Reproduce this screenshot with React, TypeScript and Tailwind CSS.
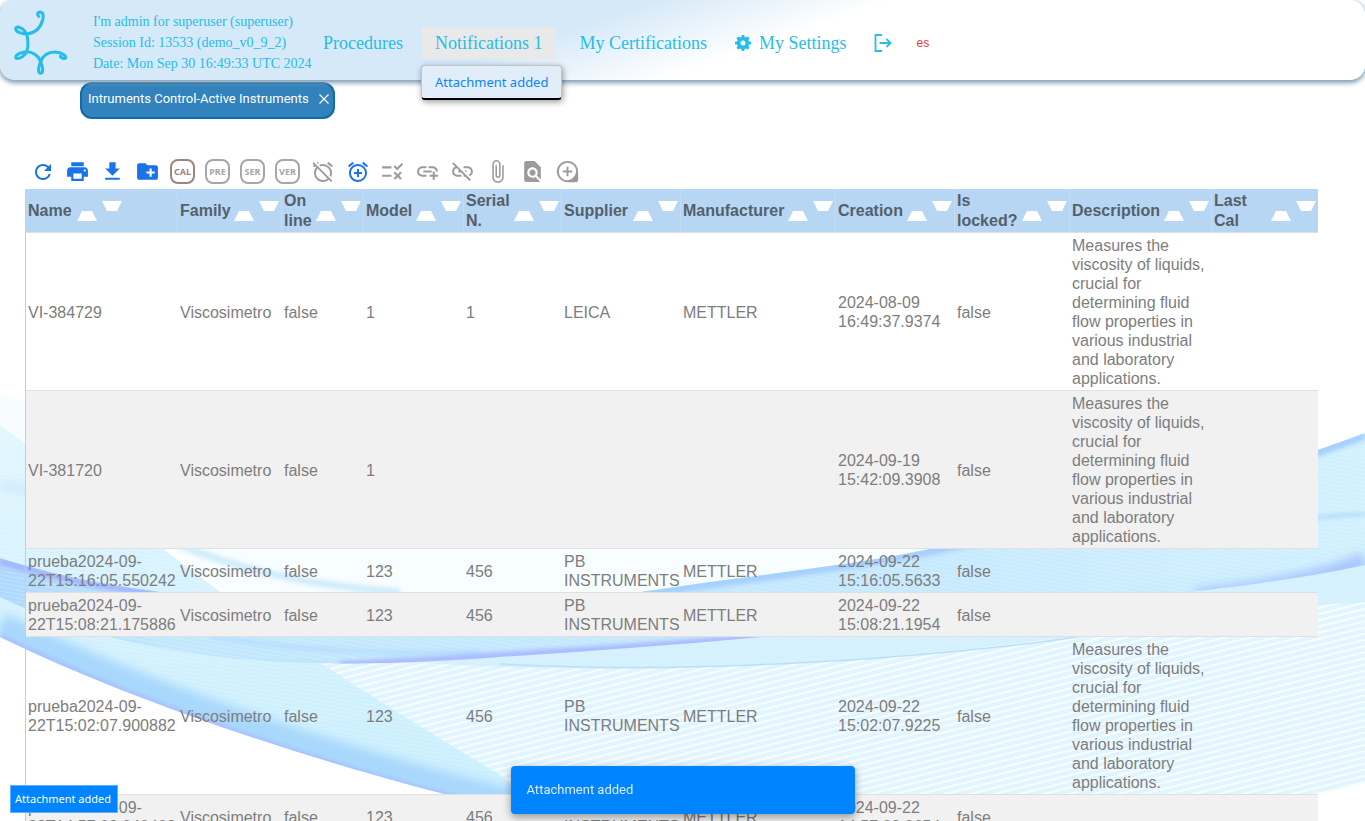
import React from "react";
import {
  MdRefresh,
  MdPrint,
  MdCreateNewFolder,
  MdAlarmOff,
  MdAddAlarm,
  MdRule,
  MdAddLink,
  MdLinkOff,
  MdAttachFile,
  MdFindInPage,
} from "react-icons/md";

const LONG_TEXT =
  "Measures the viscosity of liquids, crucial for determining fluid flow properties in various industrial and laboratory applications.";

const COLUMNS = [
  { label: "Name", width: "w-[152px]" },
  { label: "Family", width: "w-[104px]" },
  { label: "On line", width: "w-[82px]" },
  { label: "Model", width: "w-[100px]" },
  { label: "Serial N.", width: "w-[98px]" },
  { label: "Supplier", width: "w-[119px]" },
  { label: "Manufacturer", width: "w-[155px]" },
  { label: "Creation", width: "w-[119px]" },
  { label: "Is locked?", width: "w-[115px]" },
  { label: "Description", width: "w-[142px]" },
  { label: "Last Cal", width: "w-[106px]" },
];

const PB = "PB INSTRUMENTS";
const ROWS: string[][] = [
  ["VI-384729", "Viscosimetro", "false", "1", "1", "LEICA", "METTLER", "2024-08-09 16:49:37.9374", "false", LONG_TEXT, ""],
  ["VI-381720", "Viscosimetro", "false", "1", "", "", "", "2024-09-19 15:42:09.3908", "false", LONG_TEXT, ""],
  ["prueba2024-09-22T15:16:05.550242", "Viscosimetro", "false", "123", "456", PB, "METTLER", "2024-09-22 15:16:05.5633", "false", "", ""],
  ["prueba2024-09-22T15:08:21.175886", "Viscosimetro", "false", "123", "456", PB, "METTLER", "2024-09-22 15:08:21.1954", "false", "", ""],
  ["prueba2024-09-22T15:02:07.900882", "Viscosimetro", "false", "123", "456", PB, "METTLER", "2024-09-22 15:02:07.9225", "false", LONG_TEXT, ""],
  ["prueba2024-09-22T14:57:09.040403", "Viscosimetro", "false", "123", "456", PB, "METTLER", "2024-09-22 14:57:09.0654", "false", "", ""],
];

function Waves() {
  return (
    <svg
      className="absolute inset-0 -z-10 h-full w-full"
      viewBox="0 0 1365 821"
      preserveAspectRatio="none"
      aria-hidden="true"
    >
      <defs>
        <linearGradient id="leftVeil" x1="0" y1="0" x2="0" y2="1">
          <stop offset="0" stopColor="#e2f6ff" />
          <stop offset="0.5" stopColor="#d2f1fe" />
          <stop offset="1" stopColor="#c8eefd" />
        </linearGradient>
        <linearGradient id="band" x1="0" y1="0" x2="1" y2="0">
          <stop offset="0" stopColor="#a9d4fd" />
          <stop offset="0.12" stopColor="#bfe6fe" />
          <stop offset="0.65" stopColor="#bfe6fe" />
          <stop offset="1" stopColor="#cdeffe" />
        </linearGradient>
        <pattern id="hatch" width="40" height="6" patternUnits="userSpaceOnUse" patternTransform="rotate(-14)">
          <path d="M0 3H40" stroke="#fff" strokeWidth="1.600" />
        </pattern>
        <pattern id="fine" width="40" height="4" patternUnits="userSpaceOnUse" patternTransform="rotate(10)">
          <path d="M0 2H40" stroke="#fff" strokeWidth="0.800" opacity="0.35" />
        </pattern>
        <filter id="soft" x="-10%" y="-50%" width="120%" height="200%">
          <feGaussianBlur stdDeviation="2" />
        </filter>
        <filter id="softer" x="-10%" y="-50%" width="120%" height="200%">
          <feGaussianBlur stdDeviation="5" />
        </filter>
        <clipPath id="leftClip">
          <path d="M0 425C60 470 140 532 220 592S360 690 500 775L560 821C390 786 160 715 0 637Z" />
        </clipPath>
        <clipPath id="bandClip">
          <path d="M0 558C60 577 110 585 160 592C300 622 480 616 640 592C760 574 850 566 930 549C1100 515 1240 480 1365 433V565C1250 590 1100 600 960 615C800 636 650 647 500 657C300 672 140 664 0 597Z" />
        </clipPath>
      </defs>

      <path d="M0 394L30 402V450L0 425Z" fill="#f7fdff" />
      <path d="M160 540H960V640L500 775C400 730 290 640 160 540Z" fill="#f8fdff" />
      <path d="M220 592C420 640 760 650 960 610C1120 595 1250 560 1365 540V783C1200 825 1000 840 760 836L560 821L500 775C400 720 310 660 220 592Z" fill="#e1f5ff" />
      <path d="M220 592C420 640 760 650 960 610C1120 595 1250 560 1365 540V783C1200 825 1000 840 760 836L560 821L500 775C400 720 310 660 220 592Z" fill="url(#hatch)" />

      <path d="M300 650C420 668 620 676 850 660C1000 648 1100 634 1190 615C1260 608 1320 605 1365 602V560L960 610L500 650Z" fill="#d2effe" opacity="0.85" />
      <path d="M500 664C620 670 720 668 850 660C960 652 1040 644 1120 630" fill="none" stroke="#b9e0fb" strokeWidth="1.500" />

      <path d="M0 425C60 470 140 532 220 592S360 690 500 775L560 821C390 786 160 715 0 637Z" fill="url(#leftVeil)" />
      <g clipPath="url(#leftClip)">
        <path d="M0 425C60 470 140 532 220 592S360 690 500 775L560 821C390 786 160 715 0 637Z" fill="url(#fine)" />
        <path d="M0 485Q40 490 80 510" fill="none" stroke="#bfe2fb" strokeWidth="5" filter="url(#softer)" />
        <path d="M0 625C160 703 390 777 560 812" fill="none" stroke="#a9d8fd" strokeWidth="26" filter="url(#softer)" />
        <path d="M0 636C160 714 390 787 560 822" fill="none" stroke="#a3bdff" strokeWidth="5" filter="url(#soft)" />
      </g>

      <path d="M0 558C60 577 110 585 160 592C300 622 480 616 640 592C760 574 850 566 930 549C1100 515 1240 480 1365 433V565C1250 590 1100 600 960 615C800 636 650 647 500 657C300 672 140 664 0 597Z" fill="url(#band)" opacity="0.92" />
      <g clipPath="url(#bandClip)">
        <path d="M0 430H1365V821H0Z" fill="url(#fine)" />
        <path d="M0 561C60 580 110 588 160 594" fill="none" stroke="#9fb6ff" strokeWidth="7" filter="url(#soft)" />
        <path d="M640 594C760 576 850 567 930 551C1100 517 1240 482 1365 435" fill="none" stroke="#a5d0fd" strokeWidth="9" filter="url(#soft)" />
        <path d="M60 625C160 665 260 668 400 664" fill="none" stroke="#aedafb" strokeWidth="4" filter="url(#soft)" />
        <path d="M210 636C300 652 400 654 480 652" fill="none" stroke="#aedafb" strokeWidth="3" filter="url(#soft)" />
        <path d="M340 665C450 659 650 647 810 633" fill="none" stroke="#a9b8ff" strokeWidth="7" filter="url(#soft)" />
        <path d="M1195 597C1260 589 1320 580 1365 560" fill="none" stroke="#a9c6ff" strokeWidth="16" filter="url(#softer)" />
        <path d="M1250 525Q1320 516 1365 514" fill="none" stroke="#a9d4fb" strokeWidth="3" filter="url(#soft)" />
      </g>
      <path d="M180 545C250 574 320 586 400 592" fill="none" stroke="#cdecfc" strokeWidth="7" filter="url(#soft)" />
    </svg>
  );
}

function Logo() {
  return (
    <svg
      className="mt-1.5"
      width="56"
      height="66"
      viewBox="24 15 168 198"
      fill="none"
      stroke="#25bdea"
      strokeWidth="9"
      strokeLinecap="round"
      strokeLinejoin="round"
      aria-hidden="true"
    >
      <path d="M101 34C95 29 97 21 106 21C116 22 116 34 113 45C106 70 92 84 65 87C48 87 31 80 32 70C34 62 52 68 60 79C70 92 71 122 66 138C61 152 44 162 34 160C28 154 38 144 58 141C82 138 101 152 107 170C114 186 116 204 107 205C98 204 99 186 107 170C114 150 128 141 150 141C172 142 186 154 182 159C178 163 168 159 166 154" />
    </svg>
  );
}

function Arrow({ dir, label }: { dir: "up" | "down"; label: string }) {
  return (
    <button type="button" aria-label={`Sort ${label} ${dir}`} className="h-5 w-5 shrink-0">
      <svg width="20" height="20" viewBox="0 0 20 20" fill="#fff" aria-hidden="true">
        {dir === "up" ? <path d="M5 10H15L20 20H0Z" /> : <path d="M0 0H20L15 10H5Z" />}
      </svg>
    </button>
  );
}

function Tool({ label, color, children }: { label: string; color: string; children: React.ReactNode }) {
  return (
    <button type="button" aria-label={label} className={`flex h-6 w-[25px] items-center justify-center ${color}`}>
      {children}
    </button>
  );
}

function Badge({ text, tone }: { text: string; tone: string }) {
  return (
    <button
      type="button"
      className={`flex h-[25px] w-[25px] items-center justify-center rounded-lg border-2 font-["Noto_Sans",sans-serif] text-[9px] font-bold ${tone}`}
    >
      {text}
    </button>
  );
}

export default function App() {
  const gray = "text-[#9b9b9b]";
  const blue = "text-[#1a73e8]";
  return (
    <div className='relative isolate h-screen overflow-hidden bg-white font-["Liberation_Sans",Arial,sans-serif] text-base text-[#7d7d7d]'>
      <Waves />

      <header className='relative z-10 flex h-20 items-center rounded-[15px] bg-[linear-gradient(161deg,#d6e9f8_41%,#ffffff_56%)] pl-[13px] font-["Liberation_Serif",serif] text-[#25bdea] shadow-[0_2px_5px_1px_#7f9db5]'>
        <Logo />
        <div className="mt-1 ml-6 w-[230px] text-sm leading-[21px]">
          <p>I'm admin for superuser (superuser)</p>
          <p>Session Id: 13533 (demo_v0_9_2)</p>
          <p>Date: Mon Sep 30 16:49:33 UTC 2024</p>
        </div>
        <nav className="mt-1.5 flex items-center text-lg">
          <a href="#procedures">Procedures</a>
          <div className="relative ml-[18px]">
            <button type="button" className="block h-8 rounded bg-[#e9e9e9] px-3.5">
              Notifications 1
            </button>
            <a
              href="#attachment"
              className='absolute top-[38px] left-0 flex h-[35px] items-center rounded border border-b-2 border-[#b9c6d0] border-b-black bg-[#e1eef9] px-[13px] font-["Noto_Sans",sans-serif] text-[13px] whitespace-nowrap text-[#0a84ff] shadow-[1px_2px_6px_#00000066]'
            >
              Attachment added
            </a>
          </div>
          <a href="#certifications" className="ml-[23px]">My Certifications</a>
          <a href="#settings" className="ml-7 flex items-center gap-2">
            <svg width="16" height="16" viewBox="0 0 16 16" aria-hidden="true">
              <path fill="#25bdea" fillRule="evenodd" d="M6.800 0H9.200L9.600 2.100L10.900 2.600L12.700 1.500L14.500 3.300L13.400 5.100L13.900 6.400L16 6.800V9.200L13.900 9.600L13.400 10.900L14.500 12.700L12.700 14.500L10.900 13.400L9.600 13.900L9.200 16H6.800L6.400 13.900L5.100 13.400L3.300 14.500L1.500 12.700L2.600 10.900L2.100 9.600L0 9.200V6.800L2.100 6.400L2.600 5.100L1.500 3.300L3.300 1.500L5.100 2.600L6.400 2.100ZM8 5.500A2.500 2.500 0 1 0 8 10.500A2.500 2.500 0 1 0 8 5.500Z" />
            </svg>
            My Settings
          </a>
          <button type="button" aria-label="Log out" className="ml-7">
            <svg width="18" height="18" viewBox="0 0 18 18" fill="none" stroke="#25bdea" strokeWidth="1.800" aria-hidden="true">
              <path d="M8 1H1.500V17H8M5.500 9H16.500M12.500 5L16.500 9L12.500 13" />
            </svg>
          </button>
          <button type="button" className='ml-6 font-["Liberation_Sans",sans-serif] text-xs text-[#e53935]'>es</button>
        </nav>
      </header>

      <div className="flex pt-0.5 pl-20">
        <div className='flex h-[37px] items-center gap-2.5 rounded-xl border-2 border-[#0f6ca5] bg-[#3182bd] pr-1 pb-1 pl-1.5 font-["Roboto",sans-serif] text-[13px] text-white'>
          Intruments Control-Active Instruments
          <button type="button" aria-label="Close tab">
            <svg width="10" height="10" viewBox="0 0 10 10" stroke="#fff" strokeWidth="1.200" aria-hidden="true">
              <path d="M0.500 0.500L9.500 9.500M9.500 0.500L0.500 9.500" />
            </svg>
          </button>
        </div>
      </div>

      <main className="mt-10 mr-12 ml-[25px]">
        <div className="flex h-[30px] items-center gap-2.5 pb-[5px] pl-[5px]">
          <Tool label="Refresh" color={blue}><MdRefresh size={24} /></Tool>
          <Tool label="Print" color={blue}><MdPrint size={25} /></Tool>
          <Tool label="Download" color={blue}>
            <svg width="25" height="25" viewBox="0 0 24 24" fill="currentColor" aria-hidden="true">
              <path d="M19 9h-4V3H9v6H5l7 7 7-7zM5 18v2h14v-2H5z" />
            </svg>
          </Tool>
          <Tool label="New folder" color={blue}><MdCreateNewFolder size={25} /></Tool>
          <Badge text="CAL" tone="border-[#9c857e] text-[#9c857e]" />
          <Badge text="PRE" tone="border-[#a6a6a6] text-[#a6a6a6]" />
          <Badge text="SER" tone="border-[#a6a6a6] text-[#a6a6a6]" />
          <Badge text="VER" tone="border-[#a6a6a6] text-[#a6a6a6]" />
          <Tool label="Alarm off" color={gray}><MdAlarmOff size={24} /></Tool>
          <Tool label="Add alarm" color={blue}><MdAddAlarm size={24} /></Tool>
          <Tool label="Rules" color={gray}><MdRule size={25} /></Tool>
          <Tool label="Add link" color={gray}><MdAddLink size={25} /></Tool>
          <Tool label="Remove link" color={gray}><MdLinkOff size={25} /></Tool>
          <Tool label="Attach file" color={gray}><MdAttachFile size={25} /></Tool>
          <Tool label="Find in page" color={gray}><MdFindInPage size={25} /></Tool>
          <Tool label="Add" color={gray}>
            <svg width="25" height="25" viewBox="0 0 24 24" fill="none" stroke="currentColor" strokeWidth="1.800" aria-hidden="true">
              <circle cx="12" cy="12" r="9.300" />
              <path d="M12 7.500V16.500M7.500 12H16.500" />
              <path d="M21.300 13V20.500Q21.300 21.300 20.500 21.300H13Q19 20 21.300 13Z" fill="currentColor" />
            </svg>
          </Tool>
        </div>

        <table className="w-full table-fixed border-separate border-spacing-0 border-l border-[#b3d1f0] text-left">
          <thead>
            <tr>
              {COLUMNS.map((c, i) => (
                <th
                  key={c.label}
                  className={`${c.width} h-11 border-r border-b border-r-[#c3ddf5] border-b-[#e0e0e0] bg-[#b7d6f3] pr-0.5 pl-0.5 leading-[20px] font-bold text-[#54606b] last:border-r-0`}
                >
                  <div className="flex items-center gap-[5px]">
                    <span className={i === 0 ? "" : "min-w-0 flex-1"}>{c.label}</span>
                    <Arrow dir="up" label={c.label} />
                    <Arrow dir="down" label={c.label} />
                  </div>
                </th>
              ))}
            </tr>
          </thead>
          <tbody>
            {ROWS.map((r) => (
              <tr key={r[0]} className="even:bg-[#f1f1f1]">
                {r.map((v, i) => (
                  <td key={i} className="border-b border-[#e0e0e0] pt-[3px] pb-0.5 pl-0.5 leading-[19px]">
                    {v}
                  </td>
                ))}
              </tr>
            ))}
          </tbody>
        </table>
      </main>

      <div className='fixed bottom-2 left-2.5 z-20 flex h-7 items-center border border-[#5fb0ff] bg-[#0084ff] pr-1.5 pl-1 font-["Noto_Sans",sans-serif] text-[11px] text-white'>
        Attachment added
      </div>
      <div
        role="status"
        className='fixed bottom-[7px] left-1/2 z-20 flex h-12 w-[344px] -translate-x-1/2 items-center rounded bg-[#0084ff] px-4 font-["Roboto",sans-serif] text-[13px] text-[#d9ecff] shadow-[0_3px_8px_#00000066]'
      >
        Attachment added
      </div>
    </div>
  );
}
